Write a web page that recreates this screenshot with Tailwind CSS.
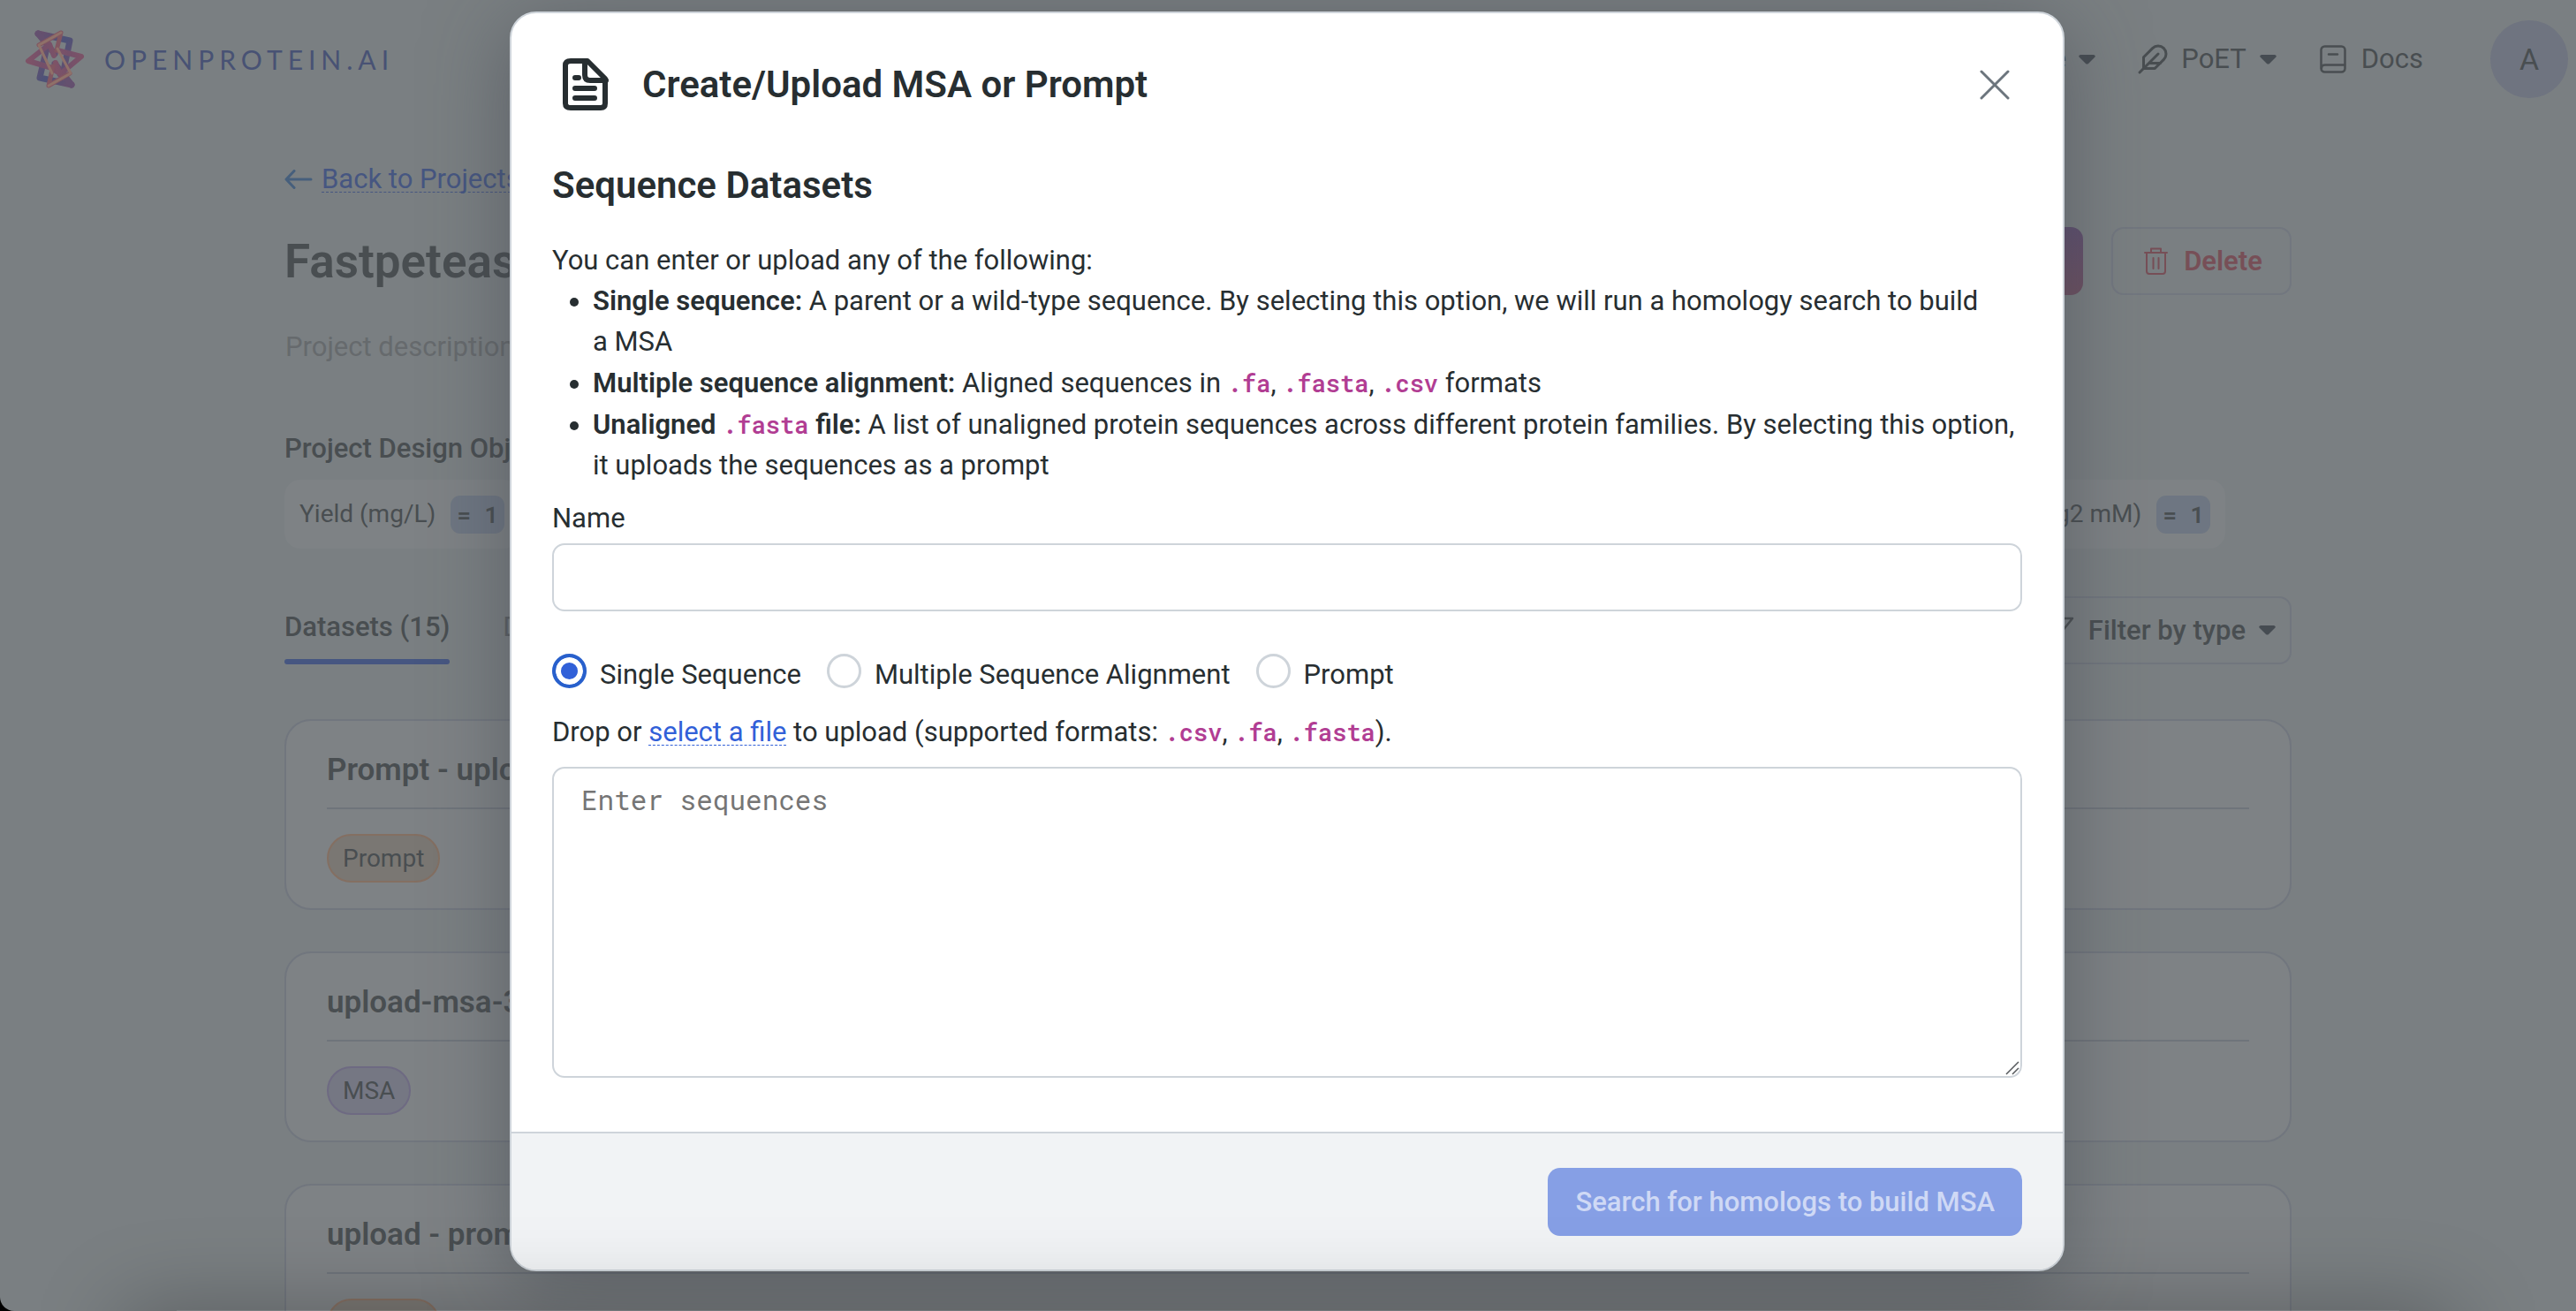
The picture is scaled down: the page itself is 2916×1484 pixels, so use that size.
<!DOCTYPE html>
<html lang="en">
<head>
<meta charset="utf-8">
<meta name="viewport" content="width=device-width, initial-scale=1">
<title>OpenProtein.AI</title>
<script src="https://cdn.jsdelivr.net/npm/@tailwindcss/browser@4"></script>
</head>
<body class="relative h-screen overflow-hidden bg-black font-['Roboto',sans-serif] text-[31px] leading-[46px] text-[#494e51]">

<div class="h-screen overflow-hidden rounded-bl-2xl bg-[#7a7f82]">
  <header class="flex h-[134px] items-center justify-between pl-7 pr-[9px]">
    <a href="#" class="flex items-center gap-[22px] font-['Lato','Roboto',sans-serif] text-[30px] text-[#485274]">
      <svg class="h-[80px] w-[68px]" viewBox="0 0 68 80" fill="none" stroke-linecap="round" stroke-linejoin="round" aria-hidden="true">
        <defs>
          <linearGradient id="lg1" x1="0" y1="0" x2="1" y2="1"><stop offset="0" stop-color="#694f6c"/><stop offset=".5" stop-color="#4d5278"/><stop offset="1" stop-color="#694f6c"/></linearGradient>
          <linearGradient id="lg2" x1="0" y1="0" x2="1" y2="0"><stop offset="0" stop-color="#7e5367"/><stop offset=".5" stop-color="#74506a"/><stop offset="1" stop-color="#7b5267"/></linearGradient>
        </defs>
        <path d="M15 11 L51 19 L44 53 L40 57" stroke="url(#lg1)" stroke-width="7"/>
        <path d="M15 11 L34 34" stroke="#64506f" stroke-width="7"/>
        <path d="M53 69 L17 61 L25 27" stroke="url(#lg1)" stroke-width="7"/>
        <path d="M53 69 L34 45" stroke="#64506f" stroke-width="7"/>
        <path d="M33 36 L28 23 L4 42 L31 50 L36 54" stroke="url(#lg2)" stroke-width="6"/>
        <path d="M35 44 L40 57 L64 37 L37 30" stroke="url(#lg2)" stroke-width="6"/>
        <path d="M36 30 L41 10 L16 24" stroke="#815661" stroke-width="5"/>
        <path d="M32 48 L27 70 L51 56" stroke="#815661" stroke-width="5"/>
        <path d="M41 10 L16 24 L31 56" stroke="#8f7169" stroke-width="3"/>
        <path d="M27 70 L52 56 L37 28" stroke="#8f7169" stroke-width="3"/>
      </svg>
      <span class="tracking-[6px]">OPENPROTEIN.AI</span>
    </a>
    <nav class="flex items-center" aria-label="Main">
      <a href="#" class="flex items-center gap-[14px]">Cloud suite
        <svg class="h-[11px] w-[19px]" viewBox="0 0 19 11" fill="#464c52" aria-hidden="true"><path d="M2 0H17Q20 1 18 3L11 10Q9.500 11 8 10L1 3Q-1 1 2 0Z"/></svg>
      </a>
      <a href="#" class="ml-[47px] flex items-center">
        <svg class="h-9 w-9" viewBox="0 0 24 24" fill="none" stroke="#494e51" stroke-width="2" stroke-linecap="round" stroke-linejoin="round" aria-hidden="true"><path d="M20.240 12.240a6 6 0 0 0-8.490-8.490L5 10.500V19h8.500z"/><path d="M16 8L2 22M17.500 15H9"/></svg>
        <span class="ml-[14px]">PoET</span>
        <svg class="ml-[15px] h-[11px] w-[19px]" viewBox="0 0 19 11" fill="#464c52" aria-hidden="true"><path d="M2 0H17Q20 1 18 3L11 10Q9.500 11 8 10L1 3Q-1 1 2 0Z"/></svg>
      </a>
      <a href="#" class="ml-[49px] flex items-center gap-[17px]">
        <svg class="h-8 w-[30px]" viewBox="0 0 30 32" fill="none" stroke="#494e51" stroke-width="2.500" stroke-linecap="round" aria-hidden="true"><rect x="1.500" y="1.500" width="27" height="29" rx="4"/><path d="M2 26Q2 22.500 6 22.500H28M10 10.500H20"/></svg>
        Docs
      </a>
      <button type="button" class="ml-[76px] h-[88px] w-[88px] rounded-full bg-[#6f7480] text-[34px]">A</button>
    </nav>
  </header>

  <main class="mx-auto max-w-[2272px] pt-[46px]">
    <a href="#" class="flex items-center gap-[10px] text-[#465681]">
      <svg class="h-[22px] w-8" viewBox="0 0 32 22" fill="none" stroke="#465f7c" stroke-width="3" stroke-linecap="round" stroke-linejoin="round" aria-hidden="true"><path d="M30 11H2M11 1.500L2 11L11 20.500"/></svg>
      <span class="underline decoration-dashed decoration-1 underline-offset-4">Back to Projects</span>
    </a>
    <div class="mt-[31px] flex h-[77px] items-center">
      <h1 class="flex-1 text-[53px] font-semibold leading-[64px]">Fastpetease</h1>
      <button type="button" class="flex h-full items-center gap-4 rounded-[14px] bg-linear-to-b from-[#5f4f6f] to-[#6d5061] px-8 font-medium text-[#a5a3aa]">Design library
        <svg class="h-[11px] w-[19px]" viewBox="0 0 19 11" fill="currentColor" aria-hidden="true"><path d="M2 0H17Q20 1 18 3L11 10Q9.500 11 8 10L1 3Q-1 1 2 0Z"/></svg>
      </button>
      <button type="button" class="ml-8 flex h-full w-[204px] items-center justify-center gap-[18px] rounded-[14px] border-2 border-[#72777f] pl-1 font-semibold text-[#774f57]">
        <svg class="h-[31px] w-[27px]" viewBox="0 0 27 31" fill="none" stroke="currentColor" stroke-width="2" stroke-linejoin="round" stroke-linecap="round" aria-hidden="true"><path d="M1 6H26M8 6V1.500H19V6M3 6V27Q3 30 6 30H21Q24 30 24 27V6M10.500 12V24M16.500 12V24"/></svg>
        Delete
      </button>
    </div>
    <p class="mt-9 pl-px text-[#666a6d]">Project description</p>
    <h2 class="mt-[69px] font-medium">Project Design Objectives</h2>
    <div class="mr-[75px] mt-3 flex justify-between text-[28px]">
      <div class="flex h-[78px] items-center gap-[17px] rounded-[18px] bg-[#7e8285] px-[17px]">Yield (mg/L)
        <span class="rounded-[11px] bg-[#6e7682] px-[7px] font-['Roboto_Mono','Liberation_Mono',monospace] text-[26px] font-semibold leading-[43px]">= 1</span>
      </div>
      <div class="flex h-[78px] items-center gap-[17px] rounded-[18px] bg-[#7e8285] px-[17px]">Activity (Mg2 mM)
        <span class="rounded-[11px] bg-[#6e7682] px-[7px] font-['Roboto_Mono','Liberation_Mono',monospace] text-[26px] font-semibold leading-[43px]">= 1</span>
      </div>
    </div>
    <div class="mt-[54px] flex h-[77px] items-end justify-between">
      <div class="flex gap-[60px]" role="tablist">
        <button type="button" role="tab" aria-selected="true" class="font-medium">Datasets (15)<span class="mt-[13px] block h-[6px] rounded-full bg-[#465681]"></span></button>
        <button type="button" role="tab" aria-selected="false" class="pb-[19px] text-[#5a5f63]">Designs</button>
      </div>
      <button type="button" class="flex h-full items-center rounded-[14px] border-2 border-[#71767e] pl-8 pr-4 font-medium">
        <svg class="mr-4 h-8 w-9" viewBox="0 0 36 32" fill="none" stroke="#494e51" stroke-width="2.500" stroke-linejoin="round" aria-hidden="true"><path d="M2 2H34L22 17V30L14 26V17Z"/></svg>
        Filter by type
        <svg class="ml-[15px] h-[11px] w-[19px]" viewBox="0 0 19 11" fill="#464c52" aria-hidden="true"><path d="M2 0H17Q20 1 18 3L11 10Q9.500 11 8 10L1 3Q-1 1 2 0Z"/></svg>
      </button>
    </div>
    <div class="mt-[62px] flex flex-col gap-[47px]">
      <article class="rounded-[30px] border-2 border-[#71767e] bg-[#7e8285] px-[46px] pb-[29px] pt-[33px]">
        <h3 class="border-b-2 border-[#6f747b] pb-[19px] text-[35px] font-semibold">Prompt - upload</h3>
        <span class="mt-7 inline-block rounded-[28px] border-2 border-[#846f62] bg-[#7a7773] px-4 text-[28px] leading-[51px]">Prompt</span>
      </article>
      <article class="rounded-[30px] border-2 border-[#71767e] bg-[#7e8285] px-[46px] pb-[29px] pt-[33px]">
        <h3 class="border-b-2 border-[#6f747b] pb-[19px] text-[35px] font-semibold">upload-msa-3</h3>
        <span class="mt-7 inline-block rounded-[28px] border-2 border-[#6e6a82] bg-[#757783] px-4 text-[28px] leading-[51px]">MSA</span>
      </article>
      <article class="rounded-[30px] border-2 border-[#71767e] bg-[#7e8285] px-[46px] pb-[29px] pt-[33px]">
        <h3 class="border-b-2 border-[#6f747b] pb-[19px] text-[35px] font-semibold">upload - prompt</h3>
        <span class="mt-7 inline-block rounded-[28px] border-2 border-[#846f62] bg-[#7a7773] px-4 text-[28px] leading-[51px]">Prompt</span>
      </article>
    </div>
  </main>
</div>

<!-- Dialog layer -->
<div class="absolute inset-0 flex items-start justify-center pr-[2px] pt-[13px]">
  <div role="dialog" aria-modal="true" aria-labelledby="dlg-title" class="w-full max-w-[1760px] overflow-hidden rounded-[30px] border-2 border-[#ced4da] bg-white text-[#272e31] shadow-[0_16px_90px_rgba(60,64,72,0.5)]">
    <div class="flex h-[161px] items-center px-[46px]">
      <svg class="ml-[11px] h-[62px] w-[54px]" viewBox="0 0 54 62" fill="none" stroke="#272e31" stroke-width="6" stroke-linecap="round" stroke-linejoin="round" aria-hidden="true"><path d="M10 4H29L49 24V52Q49 57 44 57H10Q4 57 4 52V9Q4 4 10 4Z"/><path d="M26 4V20Q26 26 32 26H50M15 23H19M15 35H37M15 46H37"/></svg>
      <h2 id="dlg-title" class="ml-[37px] flex-1 text-[42px] font-semibold leading-[50px]">Create/Upload MSA or Prompt</h2>
      <button type="button" aria-label="Close" class="mr-[14px]">
        <svg class="h-[34px] w-[34px]" viewBox="0 0 34 34" fill="none" stroke="#6c757d" stroke-width="3" stroke-linecap="round" aria-hidden="true"><path d="M2 2L32 32M32 2L2 32"/></svg>
      </button>
    </div>
    <form class="px-[46px] pb-[61px] pt-[9px]">
      <h3 class="text-[42px] font-semibold leading-[50px]">Sequence Datasets</h3>
      <p class="mt-[37px]">You can enter or upload any of the following:</p>
      <ul class="list-disc space-y-px pl-[46px]">
        <li><b class="font-semibold">Single sequence:</b> A parent or a wild-type sequence. By selecting this option, we will run a homology search to build a&nbsp;MSA</li>
        <li><b class="font-semibold">Multiple sequence alignment:</b> Aligned sequences in <code class="font-['Roboto_Mono','Liberation_Mono',monospace] text-[27px] font-semibold text-[#b13d93]">.fa</code>, <code class="font-['Roboto_Mono','Liberation_Mono',monospace] text-[27px] font-semibold text-[#b13d93]">.fasta</code>, <code class="font-['Roboto_Mono','Liberation_Mono',monospace] text-[27px] font-semibold text-[#b13d93]">.csv</code> formats</li>
        <li><b class="font-semibold">Unaligned <code class="font-['Roboto_Mono','Liberation_Mono',monospace] text-[27px] text-[#b13d93]">.fasta</code> file:</b> A list of unaligned protein sequences across different protein families. By selecting this option, it uploads the sequences as a prompt</li>
      </ul>
      <label for="name" class="mt-[14px] block">Name</label>
      <input id="name" type="text" class="mt-[5px] block h-[77px] w-full rounded-[14px] border-2 border-[#ced4da] bg-white px-8">
      <fieldset class="mt-12 flex gap-[29px]">
        <legend class="sr-only">Sequence type</legend>
        <label class="flex gap-[15px]"><input type="radio" name="kind" checked class="h-[39px] w-[39px] appearance-none rounded-full border-2 border-[#ced4da] checked:border-4 checked:border-[#2860cc] checked:bg-[#3160d8] checked:shadow-[inset_0_0_0_6px_white]"><span class="pt-px">Single Sequence</span></label>
        <label class="flex gap-[15px]"><input type="radio" name="kind" class="h-[39px] w-[39px] appearance-none rounded-full border-3 border-[#ced4da] checked:border-4 checked:border-[#2860cc]"><span class="pt-px">Multiple Sequence Alignment</span></label>
        <label class="flex gap-[15px]"><input type="radio" name="kind" class="h-[39px] w-[39px] appearance-none rounded-full border-3 border-[#ced4da] checked:border-4 checked:border-[#2860cc]"><span class="pt-px">Prompt</span></label>
      </fieldset>
      <p class="mt-[19px]">Drop or <a href="#" class="text-[#3160d8] underline decoration-dashed decoration-1 underline-offset-4">select a file</a> to upload (supported formats: <code class="font-['Roboto_Mono','Liberation_Mono',monospace] text-[27px] font-semibold text-[#b13d93]">.csv</code>, <code class="font-['Roboto_Mono','Liberation_Mono',monospace] text-[27px] font-semibold text-[#b13d93]">.fa</code>, <code class="font-['Roboto_Mono','Liberation_Mono',monospace] text-[27px] font-semibold text-[#b13d93]">.fasta</code>).</p>
      <div class="relative mt-4">
        <textarea aria-label="Sequences" placeholder="Enter sequences" class="block h-[352px] w-full resize-none rounded-[14px] border-2 border-[#ced4da] bg-white px-[31px] py-3 font-['Roboto_Mono','Liberation_Mono',monospace] placeholder:text-[#757575]"></textarea>
        <svg class="pointer-events-none absolute bottom-[3px] right-[3px] h-4 w-4" viewBox="0 0 16 16" fill="none" stroke="#55585c" stroke-width="1.500" aria-hidden="true"><path d="M1 15L15 1M8 15L15 8"/></svg>
      </div>
    </form>
    <footer class="flex justify-end border-t-2 border-[#ced4da] bg-[#f1f3f5] px-[46px] pb-[38px] pt-[39px]">
      <button type="submit" disabled class="h-[77px] rounded-[14px] bg-[#869fe5] px-[31px] font-medium text-[#cfd9f5]">Search for homologs to build MSA</button>
    </footer>
  </div>
</div>

<!-- Shade along the bottom edge of the window -->
<div class="pointer-events-none absolute inset-0 flex items-end overflow-hidden px-[200px]">
  <div class="h-px w-full shadow-[0_60px_100px_60px_rgba(0,0,0,0.27)]"></div>
</div>
</body>
</html>
